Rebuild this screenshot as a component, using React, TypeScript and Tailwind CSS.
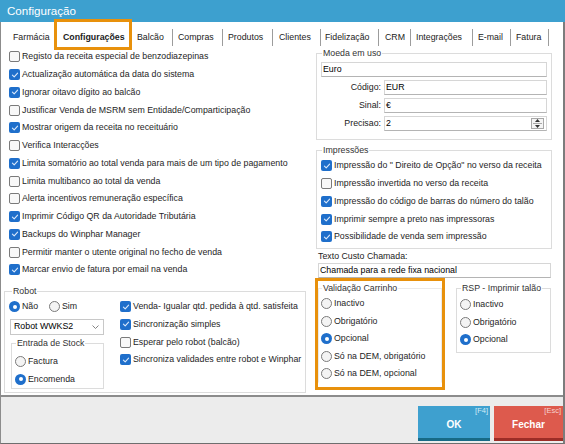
import React from "react";

const F = "font-['Liberation_Sans',Arial,sans-serif]";
const T = "text-[8.8px] leading-[11px]";

function Check({ on }: { on?: boolean }) {
  return on ? (
    <span className="w-[11px] h-[11px] rounded-[2px] bg-[#1f6fcb] flex items-center justify-center shrink-0">
      <svg width="8" height="8" viewBox="0 0 8 8">
        <path d="M1.4 4.1 L3.2 5.9 L6.6 2.1" fill="none" stroke="#dbe9fb" strokeWidth="1.1" strokeLinecap="round" strokeLinejoin="round" />
      </svg>
    </span>
  ) : (
    <span className="w-[11px] h-[11px] rounded-[2px] border border-[#7a7a7a] bg-[#f8f8f8] shrink-0" />
  );
}

function Radio({ on }: { on?: boolean }) {
  return on ? (
    <span className="w-[11px] h-[11px] rounded-full bg-[#1f6fcb] flex items-center justify-center shrink-0">
      <span className="w-[4px] h-[4px] rounded-full bg-white" />
    </span>
  ) : (
    <span className="w-[11px] h-[11px] rounded-full border border-[#7a7a7a] bg-[#f4f4f4] shrink-0" />
  );
}

function CRow({ on, label }: { on?: boolean; label: string }) {
  return (
    <div className={`flex items-center gap-[2px] h-[17.75px] whitespace-nowrap ${T}`}>
      <Check on={on} />
      <span>{label}</span>
    </div>
  );
}

function RRow({ on, label, h }: { on?: boolean; label: string; h?: string }) {
  return (
    <div className={`flex items-center gap-[2px] ${h ?? "h-[17.75px]"} whitespace-nowrap ${T}`}>
      <Radio on={on} />
      <span>{label}</span>
    </div>
  );
}

const tabs = [
  { l: "Farmácia", c: "w-[54px] pl-[12px]", sep: false, active: false },
  { l: "Configurações", c: "w-[76px] pl-[8px]", sep: false, active: true },
  { l: "Balcão", c: "w-[41px] pl-[6px]", sep: true, active: false },
  { l: "Compras", c: "w-[49px] pl-[5px]", sep: true, active: false },
  { l: "Produtos", c: "w-[49px] pl-[5px]", sep: true, active: false },
  { l: "Clientes", c: "w-[47px] pl-[6px]", sep: true, active: false },
  { l: "Fidelização", c: "w-[57px] pl-[4px]", sep: true, active: false },
  { l: "CRM", c: "w-[31px] pl-[6px]", sep: true, active: false },
  { l: "Integrações", c: "w-[61px] pl-[5px]", sep: true, active: false },
  { l: "E-mail", c: "w-[37px] pl-[5px]", sep: true, active: false },
  { l: "Fatura", c: "w-[37px] pl-[5px]", sep: true, active: false },
];

const leftChecks: [boolean, string][] = [
  [false, "Registo da receita especial de benzodiazepinas"],
  [true, "Actualização automática da data do sistema"],
  [true, "Ignorar oitavo dígito ao balcão"],
  [false, "Justificar Venda de MSRM sem Entidade/Comparticipação"],
  [true, "Mostrar origem da receita no receituário"],
  [false, "Verifica Interacções"],
  [true, "Limita somatório ao total venda para mais de um tipo de pagamento"],
  [false, "Limita multibanco ao total da venda"],
  [false, "Alerta incentivos remuneração específica"],
  [true, "Imprimir Código QR da Autoridade Tributária"],
  [true, "Backups do Winphar Manager"],
  [false, "Permitir manter o utente original no fecho de venda"],
  [true, "Marcar envio de fatura por email na venda"],
];

const Legend = ({ children, c }: { children: React.ReactNode; c: string }) => (
  <legend className={`${c} px-[1px] ${T} text-[#333]`}>{children}</legend>
);

function Input({ value, spin }: { value: string; spin?: boolean }) {
  return (
    <div className={`flex-1 h-[15px] border border-[#d6d6d6] border-b-[#b4b4b4] bg-white flex items-center pl-[1px] ${T} text-black`}>
      <span className="flex-1">{value}</span>
      {spin && (
        <span className="w-[13px] h-[11px] mr-[2px] border border-[#a8a8a8] bg-[#f4f4f4] flex flex-col items-center justify-center gap-[1px]">
          <svg width="5" height="3" viewBox="0 0 5 3"><path d="M0 3 L2.5 0 L5 3Z" fill="#333" /></svg>
          <span className="w-[9px] h-px bg-[#a8a8a8]" />
          <svg width="5" height="3" viewBox="0 0 5 3"><path d="M0 0 L2.5 3 L5 0Z" fill="#333" /></svg>
        </span>
      )}
    </div>
  );
}

function LabeledInput({ label, value, spin }: { label: string; value: string; spin?: boolean }) {
  return (
    <div className="flex items-center h-[15px]">
      <span className={`w-[63px] text-right pr-[3px] ${T} text-[#222]`}>{label}</span>
      <Input value={value} spin={spin} />
    </div>
  );
}

export default function App() {
  return (
    <div className={`w-[565px] h-[444px] flex flex-col bg-white text-[#1e1e1e] ${F}`}>
      <div className="h-[22px] shrink-0 bg-[#3da0cf] flex items-center pl-[7px] text-white text-[11.6px]">
        Configuração
      </div>
      <div className="flex-1 min-h-0 flex flex-col border-l border-r-2 border-b border-l-[#8c8c8c] border-r-[#7c7c7c] border-b-[#6e6e6e]">
        {/* Tabs */}
        <div className="h-[26px] shrink-0 flex">
          {tabs.map((t) => (
            <React.Fragment key={t.l}>
              <div className={`${t.c} h-[26px] pt-[4px] flex items-center relative ${T} text-[#222] ${t.active ? "font-bold" : ""}`}>
                {t.l}
                {t.active && (
                  <span className="absolute -left-[1px] -right-[1px] -top-[3px] -bottom-[2px] border-[3px] border-[#e8910c]" />
                )}
              </div>
              {t.sep && (
                <div className="h-[26px] pt-[4px] flex items-center">
                  <span className="w-px h-[17px] bg-[#9c9c9c]" />
                </div>
              )}
            </React.Fragment>
          ))}
        </div>

        {/* Content */}
        <div className="flex-1 min-h-0 flex border-b-2 border-[#8c8c8c]">
          {/* Left column */}
          <div className="ml-[3px] w-[302px] flex flex-col">
            <div className="pl-[5px] flex flex-col">
              {leftChecks.map(([on, l]) => (
                <CRow key={l} on={on} label={l} />
              ))}
            </div>
            <fieldset className="mt-[7px] border border-[#dcdcdc]">
              <Legend c="ml-[7px]">Robot</Legend>
              <div className="flex pt-[1px] pb-[3px]">
                <div className="w-[100px] pl-[4px] flex flex-col">
                  <div className="flex">
                    <div className="w-[40px]"><RRow on label="Não" /></div>
                    <RRow label="Sim" />
                  </div>
                  <div className={`mt-[3px] ml-[1px] w-[94px] h-[16px] border border-[#c8c8c8] bg-white flex items-center pl-[3px] pr-[4px] ${T} text-black`}>
                    <span className="flex-1">Robot WWKS2</span>
                    <svg width="7" height="4" viewBox="0 0 7 4"><path d="M0.5 0.5 L3.5 3.5 L6.5 0.5" fill="none" stroke="#777" strokeWidth="0.9" /></svg>
                  </div>
                  <fieldset className="mt-[3px] ml-[2px] w-[93px] border border-[#dcdcdc]">
                    <Legend c="ml-[4px]">Entrada de Stock</Legend>
                    <div className="pl-[3px] pt-[4px] flex flex-col">
                      <RRow label="Factura" />
                      <RRow on label="Encomenda" />
                    </div>
                  </fieldset>
                </div>
                <div className="ml-[15px] flex flex-col">
                  <CRow on label="Venda- Igualar qtd. pedida à qtd. satisfeita" />
                  <CRow on label="Sincronização simples" />
                  <CRow label="Esperar pelo robot (balcão)" />
                  <CRow on label="Sincroniza validades entre robot e Winphar" />
                </div>
              </div>
            </fieldset>
          </div>

          {/* Right column */}
          <div className="ml-[10px] w-[236px] flex flex-col">
            <fieldset className="border border-[#dcdcdc]">
              <Legend c="ml-[5px]">Moeda em uso</Legend>
              <div className="px-[4px] pt-[3px] pb-[8px] flex flex-col gap-[3px]">
                <div className="flex h-[15px]"><Input value="Euro" /></div>
                <LabeledInput label="Código:" value="EUR" />
                <LabeledInput label="Sinal:" value="€" />
                <LabeledInput label="Precisao:" value="2" spin />
              </div>
            </fieldset>
            <fieldset className="mt-[5px] border border-[#dcdcdc]">
              <Legend c="ml-[5px]">Impressões</Legend>
              <div className="pl-[4px] pt-[1px] pb-[2px] flex flex-col">
                <CRow on label={'Impressão do " Direito de Opção" no verso da receita'} />
                <CRow label="Impressão invertida no verso da receita" />
                <CRow on label="Impressão do código de barras do número do talão" />
                <CRow on label="Imprimir sempre a preto nas impressoras" />
                <CRow on label="Possibilidade de venda sem impressão" />
              </div>
            </fieldset>
            <div className={`mt-[2px] ml-[2px] ${T} text-[#222]`}>Texto Custo Chamada:</div>
            <div className="mt-[1px] ml-[2px] mr-[1px] flex h-[16px]"><Input value="Chamada para a rede fixa nacional" /></div>
            <div className="flex items-start -mt-[1px]">
              <div className="-ml-[1px] w-[130px] h-[112px] border-[3px] border-[#e8910c] flex flex-col">
                <fieldset className="mt-[2px] border border-[#eaeaea] border-b-transparent">
                  <Legend c="ml-[3px]">Validação Carrinho</Legend>
                  <div className="pl-[2px] pt-[1px] flex flex-col">
                    <RRow h="h-[17.5px]" label="Inactivo" />
                    <RRow h="h-[17.5px]" label="Obrigatório" />
                    <RRow h="h-[17.5px]" on label="Opcional" />
                    <RRow h="h-[17.5px]" label="Só na DEM, obrigatório" />
                    <RRow h="h-[17.5px]" label="Só na DEM, opcional" />
                  </div>
                </fieldset>
              </div>
              <fieldset className="ml-[11px] mt-[5px] w-[95px] border border-[#dcdcdc]">
                <Legend c="ml-[4px]">RSP - Imprimir talão</Legend>
                <div className="pl-[3px] pt-[2px] pb-[4px] flex flex-col">
                  <RRow h="h-[17.5px]" label="Inactivo" />
                  <RRow h="h-[17.5px]" label="Obrigatório" />
                  <RRow h="h-[17.5px]" on label="Opcional" />
                </div>
              </fieldset>
            </div>
          </div>
        </div>

        {/* Footer */}
        <div className="h-[46px] shrink-0 bg-[#ececec] flex justify-end items-start pt-[9px] gap-[4px]">
          <div className="w-[72px] h-[35px] bg-[#3ea0cf] flex flex-col">
            <div className="h-[11px] text-right pr-[2px] text-[7.5px] leading-[10px] text-[#d3ebf6]">[F4]</div>
            <div className="h-[14px] flex items-center justify-center font-bold text-white text-[10px]">OK</div>
            <div className="flex-1" />
            <div className="h-[3px] bg-[#176a86]" />
          </div>
          <div className="w-[69px] h-[35px] bg-[#dd5a4d] flex flex-col">
            <div className="h-[11px] text-right pr-[2px] text-[7.5px] leading-[10px] text-[#f6d3cf]">[Esc]</div>
            <div className="h-[14px] flex items-center justify-center font-bold text-white text-[10px]">Fechar</div>
            <div className="flex-1" />
            <div className="h-[3px] bg-[#9c2d27]" />
          </div>
        </div>
      </div>
    </div>
  );
}
